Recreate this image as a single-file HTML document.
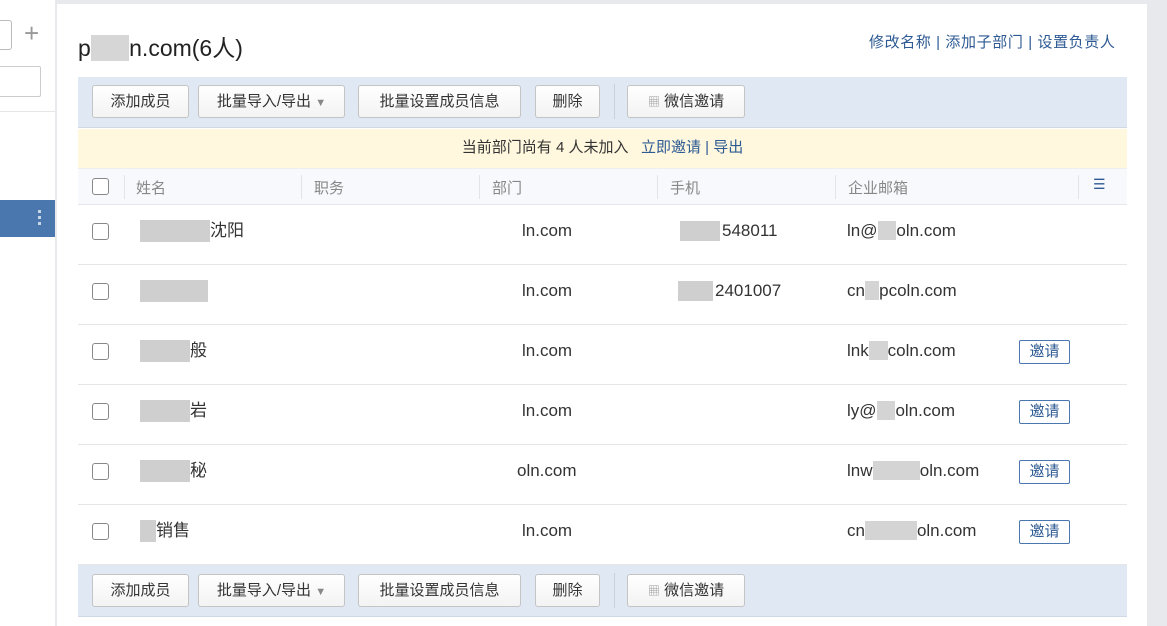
<!DOCTYPE html>
<html><head><meta charset="utf-8"><style>
*{margin:0;padding:0;box-sizing:border-box}
body{width:1167px;height:626px;background:#e8e9ec;font-family:"Liberation Sans","Noto Sans CJK SC",sans-serif;color:#333;position:relative;overflow:hidden}
.a{position:absolute}
.btn{position:absolute;height:33px;border:1px solid #c4c4c4;border-radius:3px;background:linear-gradient(#fff,#f3f3f3);font-size:15px;line-height:31px;text-align:center;color:#333}
.hd{font-size:15px;color:#888;top:177px}
.vd{position:absolute;top:175px;width:1px;height:24px;background:#e2e4e8}
.cb{position:absolute;left:92px;width:17px;height:17px;border:1px solid #888;border-radius:3px;background:#fff}
.t{position:absolute;font-size:17px;color:#333;line-height:22px}
.bl{position:absolute;background:#cfcfcf}
.inv{position:absolute;left:1019px;width:51px;height:24px;border:1px solid #4a77ad;border-radius:2px;color:#2d5a93;font-size:15px;line-height:22px;text-align:center}
</style></head><body>
<div class="a" style="left:0;top:0;width:55px;height:626px;background:#fff"></div>
<div class="a" style="left:-5px;top:20px;width:17px;height:30px;border:1px solid #bbb;border-radius:3px;background:#fff"></div>
<div class="a" style="left:24px;top:18px;font-size:26px;color:#999;font-weight:300">+</div>
<div class="a" style="left:-5px;top:66px;width:46px;height:31px;border:1px solid #ccc;border-radius:2px"></div>
<div class="a" style="left:0;top:111px;width:55px;height:1px;background:#e6e6e6"></div>
<div class="a" style="left:0;top:200px;width:55px;height:37px;background:#4a77ad"></div>
<div class="a" style="left:38px;top:210px;width:3px;height:3px;background:#c8d6e8;box-shadow:0 6px #c8d6e8,0 12px #c8d6e8"></div>
<div class="a" style="left:57px;top:4px;width:1090px;height:622px;background:#fff"></div>
<div class="a" style="left:78px;top:29px;font-size:23px;color:#222">p<span style="color:#fff;background:#d6d6d6">&nbsp;&nbsp;&nbsp;&nbsp;&nbsp;&nbsp;</span>n.com(6人)</div>
<div class="a" style="left:869px;top:31px;font-size:15px;color:#2d5a93;letter-spacing:0.6px;white-space:nowrap">修改名称 | 添加子部门 | 设置负责人</div>
<div class="a" style="left:78px;top:77px;width:1049px;height:51px;background:#dfe8f3;border-bottom:1px solid #cfd9e6"></div>
<div class="a" style="left:78px;top:564px;width:1049px;height:53px;background:#dfe8f3;border-bottom:1px solid #cfd9e6"></div>
<div class="btn" style="left:92px;top:85px;width:97px">添加成员</div>
<div class="btn" style="left:198px;top:85px;width:147px">批量导入/导出 <span style="color:#888;font-size:11px">▼</span></div>
<div class="btn" style="left:358px;top:85px;width:163px">批量设置成员信息</div>
<div class="btn" style="left:535px;top:85px;width:65px">删除</div>
<div class="a" style="left:614px;top:84px;width:1px;height:35px;background:#c8d0da"></div>
<div class="btn" style="left:627px;top:85px;width:118px"><span style="color:#999;font-size:12px">▦</span> 微信邀请</div>
<div class="btn" style="left:92px;top:574px;width:97px">添加成员</div>
<div class="btn" style="left:198px;top:574px;width:147px">批量导入/导出 <span style="color:#888;font-size:11px">▼</span></div>
<div class="btn" style="left:358px;top:574px;width:163px">批量设置成员信息</div>
<div class="btn" style="left:535px;top:574px;width:65px">删除</div>
<div class="a" style="left:614px;top:573px;width:1px;height:35px;background:#c8d0da"></div>
<div class="btn" style="left:627px;top:574px;width:118px"><span style="color:#999;font-size:12px">▦</span> 微信邀请</div>
<div class="a" style="left:78px;top:129px;width:1049px;height:40px;background:#fff8de;border-bottom:1px solid #eee;font-size:15px;line-height:38px;text-align:center;color:#333">当前部门尚有 4 人未加入&nbsp;&nbsp;&nbsp;<span style="color:#2d5a93">立即邀请 | 导出</span></div>
<div class="a" style="left:78px;top:169px;width:1049px;height:36px;background:#f7f9fc;border-bottom:1px solid #e3e6ea"></div>
<div class="cb" style="top:178px"></div>
<div class="vd" style="left:124px"></div><div class="vd" style="left:301px"></div><div class="vd" style="left:479px"></div><div class="vd" style="left:657px"></div><div class="vd" style="left:835px"></div><div class="vd" style="left:1078px"></div>
<div class="a hd" style="left:136px">姓名</div><div class="a hd" style="left:314px">职务</div><div class="a hd" style="left:492px">部门</div><div class="a hd" style="left:670px">手机</div><div class="a hd" style="left:848px">企业邮箱</div>
<div class="a" style="left:1093px;top:176px;font-size:14px;color:#2d5a93">☰</div>
<div class="a" style="left:78px;top:264px;width:1049px;height:1px;background:#e6e6e6"></div>
<div class="a" style="left:78px;top:324px;width:1049px;height:1px;background:#e6e6e6"></div>
<div class="a" style="left:78px;top:384px;width:1049px;height:1px;background:#e6e6e6"></div>
<div class="a" style="left:78px;top:444px;width:1049px;height:1px;background:#e6e6e6"></div>
<div class="a" style="left:78px;top:504px;width:1049px;height:1px;background:#e6e6e6"></div>
<div class="a" style="left:78px;top:564px;width:1049px;height:1px;background:#e6e6e6"></div>
<div class="cb" style="top:223px"></div><div class="cb" style="top:283px"></div><div class="cb" style="top:343px"></div><div class="cb" style="top:403px"></div><div class="cb" style="top:463px"></div><div class="cb" style="top:523px"></div>

<div class="bl" style="left:140px;top:220px;width:70px;height:22px"></div><div class="t" style="left:210px;top:220px">沈阳</div>
<div class="bl" style="left:140px;top:280px;width:68px;height:22px"></div>
<div class="bl" style="left:140px;top:340px;width:50px;height:22px"></div><div class="t" style="left:190px;top:340px">般</div>
<div class="bl" style="left:140px;top:400px;width:50px;height:22px"></div><div class="t" style="left:190px;top:400px">岩</div>
<div class="bl" style="left:140px;top:460px;width:50px;height:22px"></div><div class="t" style="left:190px;top:460px">秘</div>
<div class="bl" style="left:140px;top:520px;width:16px;height:22px"></div><div class="t" style="left:156px;top:520px">销售</div>

<div class="t" style="left:522px;top:220px">ln.com</div>
<div class="t" style="left:522px;top:280px">ln.com</div>
<div class="t" style="left:522px;top:340px">ln.com</div>
<div class="t" style="left:522px;top:400px">ln.com</div>
<div class="t" style="left:517px;top:460px">oln.com</div>
<div class="t" style="left:522px;top:520px">ln.com</div>

<div class="bl" style="left:680px;top:221px;width:40px;height:20px"></div><div class="t" style="left:722px;top:220px">548011</div>
<div class="bl" style="left:678px;top:281px;width:35px;height:20px"></div><div class="t" style="left:715px;top:280px">2401007</div>

<div class="t" style="left:847px;top:220px">ln@<span style="color:#fff;background:#d4d4d4">&nbsp;&nbsp;&nbsp;&nbsp;</span>oln.com</div>
<div class="t" style="left:847px;top:280px">cn<span style="color:#fff;background:#d4d4d4">&nbsp;&nbsp;&nbsp;</span>pcoln.com</div>
<div class="t" style="left:847px;top:340px">lnk<span style="color:#fff;background:#d4d4d4">&nbsp;&nbsp;&nbsp;&nbsp;</span>coln.com</div>
<div class="t" style="left:847px;top:400px">ly@<span style="color:#fff;background:#d4d4d4">&nbsp;&nbsp;&nbsp;&nbsp;</span>oln.com</div>
<div class="t" style="left:847px;top:460px">lnw<span style="color:#fff;background:#d4d4d4">&nbsp;&nbsp;&nbsp;&nbsp;&nbsp;&nbsp;&nbsp;&nbsp;&nbsp;&nbsp;</span>oln.com</div>
<div class="t" style="left:847px;top:520px">cn<span style="color:#fff;background:#d4d4d4">&nbsp;&nbsp;&nbsp;&nbsp;&nbsp;&nbsp;&nbsp;&nbsp;&nbsp;&nbsp;&nbsp;</span>oln.com</div>

<div class="inv" style="top:340px">邀请</div>
<div class="inv" style="top:400px">邀请</div>
<div class="inv" style="top:460px">邀请</div>
<div class="inv" style="top:520px">邀请</div>
</body></html>
